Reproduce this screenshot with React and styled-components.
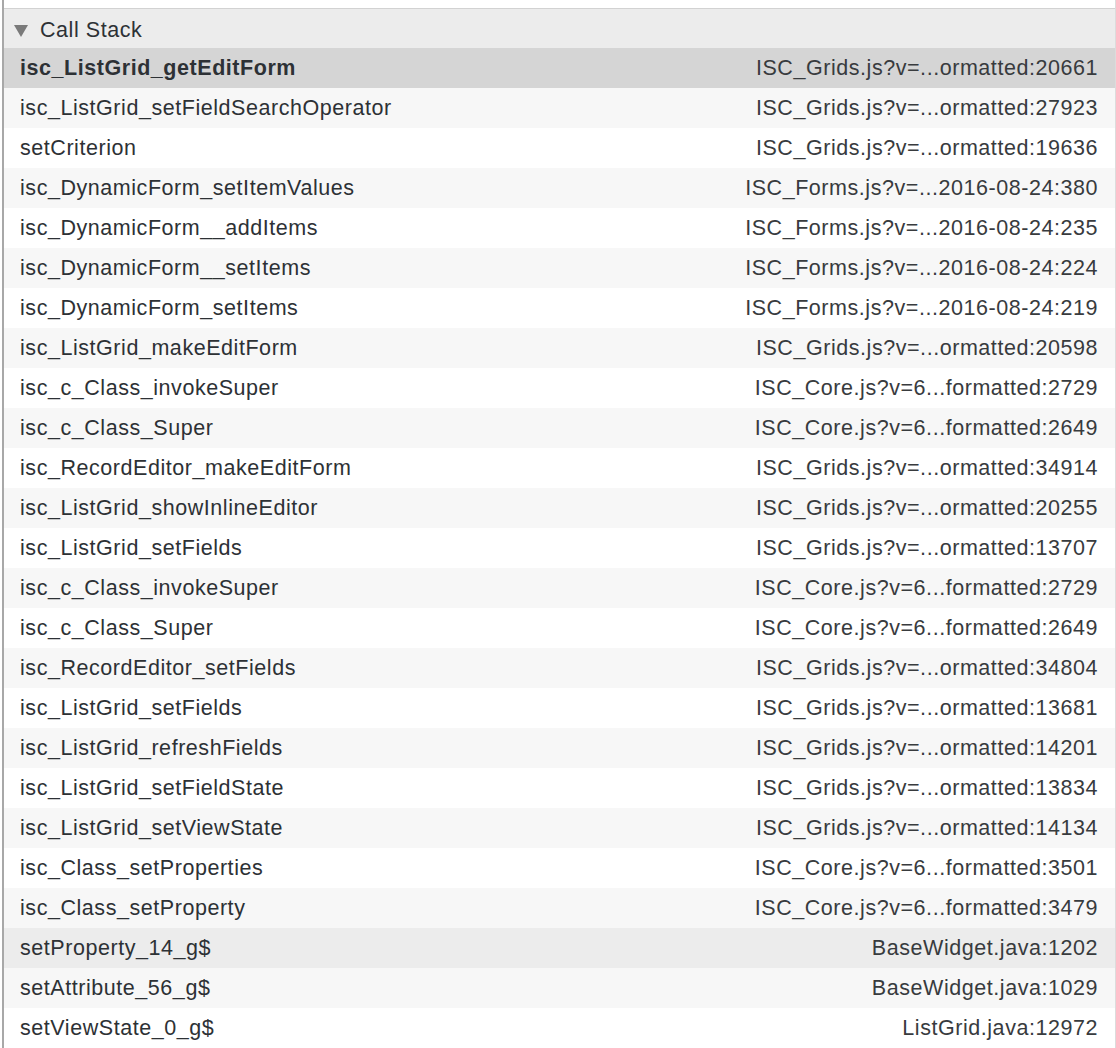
import React from 'react'
import styled, { createGlobalStyle } from 'styled-components'

const GlobalStyle = createGlobalStyle`
  body {
    margin: 0;
    background: #fff;
    font-family: "Liberation Sans", Arial, sans-serif;
  }
`

const Page = styled.div`
  width: 1116px;
  height: 1048px;
  overflow: hidden;
  background: #fff;
  display: flex;
`

const Frame = styled.div`
  margin-left: 2px;
  width: 1111px;
  border-left: 2px solid #a8a8a8;
  border-right: 1px solid #dcdcdc;
  padding-top: 8px;
  display: flex;
  flex-direction: column;
`

const Header = styled.div`
  height: 40px;
  flex: none;
  border-top: 1px solid #d2d2d2;
  background: #ececec;
  display: flex;
  align-items: center;
  padding: 3px 0 0 10px;
  box-sizing: border-box;
  gap: 12px;
  font-size: 21.5px;
  letter-spacing: 0.55px;
  color: #2d3135;
`

const Triangle = styled.span`
  width: 0;
  height: 0;
  border-left: 7px solid transparent;
  border-right: 7px solid transparent;
  border-top: 12px solid #7a7a7a;
  margin-top: 1px;
`

const List = styled.div`
  display: flex;
  flex-direction: column;
`

const rowBg = {
  selected: '#d5d5d5',
  muted: '#ececec',
  odd: '#f7f7f7',
  even: '#fff'
}

const Row = styled.div`
  height: 40px;
  flex: none;
  display: flex;
  align-items: center;
  justify-content: space-between;
  padding: 1px 17px 0 16px;
  box-sizing: border-box;
  font-size: 21.5px;
  letter-spacing: 0.55px;
  color: #2d3135;
  background: ${p => rowBg[p.$tone]};
  font-weight: ${p => (p.$tone === 'selected' ? 700 : 400)};
`

const Name = styled.span`
  white-space: nowrap;
`

const Location = styled.span`
  white-space: nowrap;
  font-weight: 400;
  color: #383b3e;
`

const frames = [
  ['isc_ListGrid_getEditForm', 'ISC_Grids.js?v=...ormatted:20661'],
  ['isc_ListGrid_setFieldSearchOperator', 'ISC_Grids.js?v=...ormatted:27923'],
  ['setCriterion', 'ISC_Grids.js?v=...ormatted:19636'],
  ['isc_DynamicForm_setItemValues', 'ISC_Forms.js?v=...2016-08-24:380'],
  ['isc_DynamicForm__addItems', 'ISC_Forms.js?v=...2016-08-24:235'],
  ['isc_DynamicForm__setItems', 'ISC_Forms.js?v=...2016-08-24:224'],
  ['isc_DynamicForm_setItems', 'ISC_Forms.js?v=...2016-08-24:219'],
  ['isc_ListGrid_makeEditForm', 'ISC_Grids.js?v=...ormatted:20598'],
  ['isc_c_Class_invokeSuper', 'ISC_Core.js?v=6...formatted:2729'],
  ['isc_c_Class_Super', 'ISC_Core.js?v=6...formatted:2649'],
  ['isc_RecordEditor_makeEditForm', 'ISC_Grids.js?v=...ormatted:34914'],
  ['isc_ListGrid_showInlineEditor', 'ISC_Grids.js?v=...ormatted:20255'],
  ['isc_ListGrid_setFields', 'ISC_Grids.js?v=...ormatted:13707'],
  ['isc_c_Class_invokeSuper', 'ISC_Core.js?v=6...formatted:2729'],
  ['isc_c_Class_Super', 'ISC_Core.js?v=6...formatted:2649'],
  ['isc_RecordEditor_setFields', 'ISC_Grids.js?v=...ormatted:34804'],
  ['isc_ListGrid_setFields', 'ISC_Grids.js?v=...ormatted:13681'],
  ['isc_ListGrid_refreshFields', 'ISC_Grids.js?v=...ormatted:14201'],
  ['isc_ListGrid_setFieldState', 'ISC_Grids.js?v=...ormatted:13834'],
  ['isc_ListGrid_setViewState', 'ISC_Grids.js?v=...ormatted:14134'],
  ['isc_Class_setProperties', 'ISC_Core.js?v=6...formatted:3501'],
  ['isc_Class_setProperty', 'ISC_Core.js?v=6...formatted:3479'],
  ['setProperty_14_g$', 'BaseWidget.java:1202'],
  ['setAttribute_56_g$', 'BaseWidget.java:1029'],
  ['setViewState_0_g$', 'ListGrid.java:12972']
]

const toneFor = i => {
  if (i === 0) return 'selected'
  if (i === 22) return 'muted'
  return i % 2 ? 'odd' : 'even'
}

const App = () => (
  <Page>
    <GlobalStyle />
    <Frame>
      <Header>
        <Triangle />
        Call Stack
      </Header>
      <List>
        {frames.map(([name, loc], i) => (
          <Row key={i} $tone={toneFor(i)}>
            <Name>{name}</Name>
            <Location>{loc}</Location>
          </Row>
        ))}
      </List>
    </Frame>
  </Page>
)

export default App
